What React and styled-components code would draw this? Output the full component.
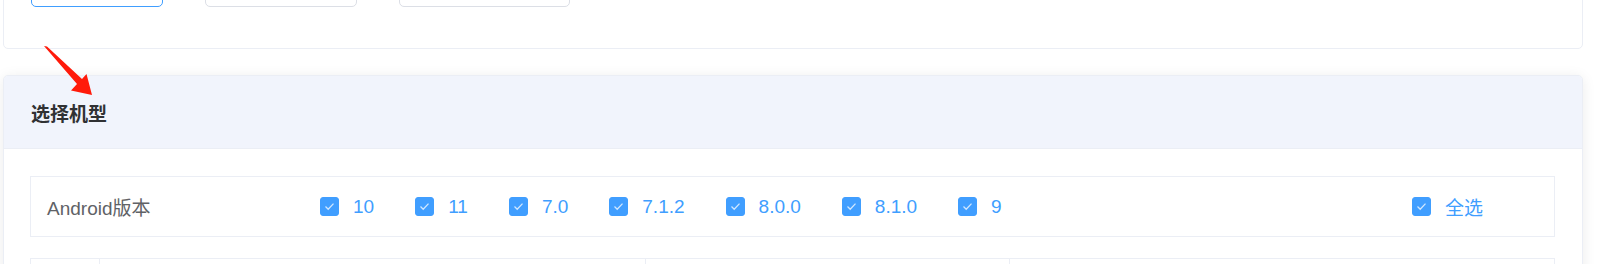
import React from "react";
import styled, { createGlobalStyle } from "styled-components";

const GlobalStyle = createGlobalStyle`
  html {
    overflow: hidden;
  }
  body {
    margin: 0;
    padding: 0;
    background: #ffffff;
    font-family: "Liberation Sans", Arial, "Noto Sans CJK SC", sans-serif;
  }
`;

const Page = styled.div`
  position: relative;
  display: flow-root;
  width: 1580px;
  padding-left: 3px;
`;

const TopCard = styled.div`
  box-sizing: border-box;
  height: 100px;
  margin-top: -51px;
  border: 1px solid #ebeef5;
  border-radius: 5px;
  background: #fff;
  display: flex;
  align-items: flex-start;
  gap: 42px;
  padding: 17px 0 0 27px;
`;

const TabButton = styled.button`
  box-sizing: border-box;
  width: ${(p) => p.w}px;
  height: 40px;
  border-radius: 5px;
  background: #fff;
  border: 1px solid ${(p) => (p.active ? "#409eff" : "#dcdfe6")};
  color: ${(p) => (p.active ? "#409eff" : "#606266")};
  font-size: 19px;
  font-family: inherit;
`;

const Card = styled.div`
  margin-top: 26px;
  border: 1px solid #ebeef5;
  border-radius: 5px;
  background: #fff;
  box-shadow: 0 2px 14px 0 rgba(0, 0, 0, 0.08);
  overflow: hidden;
`;

const CardHeader = styled.div`
  height: 72px;
  display: flex;
  align-items: center;
  padding-left: 27px;
  background: #f1f4fc;
  border-bottom: 1px solid #ebeef5;
`;

const Title = styled.h3`
  margin: 0;
  font-size: 19px;
  font-weight: 700;
  color: #303133;
`;

const CardBody = styled.div`
  padding: 27px 27px 40px 26px;
`;

const FilterRow = styled.div`
  box-sizing: border-box;
  height: 61px;
  border: 1px solid #ebeef5;
  display: flex;
  align-items: center;
`;

const RowLabel = styled.div`
  box-sizing: border-box;
  width: 289px;
  padding-left: 16px;
  font-size: 19px;
  color: #606266;
`;

const Options = styled.div`
  flex: 1;
  display: flex;
  align-items: center;
`;

const Option = styled.label`
  display: flex;
  align-items: center;
  margin-right: ${(p) => (p.last ? 71 : 41)}px;
  font-size: 19px;
  color: #409eff;
  cursor: pointer;
`;

const Box = styled.span`
  box-sizing: border-box;
  width: 19px;
  height: 19px;
  border-radius: 3px;
  background: #409eff;
  border: 1px solid #409eff;
  display: flex;
  align-items: center;
  justify-content: center;
`;

const OptionText = styled.span`
  padding-left: 14px;
`;

const Table = styled.div`
  margin-top: 21px;
  display: grid;
  grid-template-columns: 68px 546px 364px 1fr;
  border: 1px solid #ebeef5;
  height: 50px;
`;

const Cell = styled.div`
  border-left: ${(p) => (p.first ? "none" : "1px solid #ebeef5")};
`;

const Arrow = styled.svg`
  position: absolute;
  left: 0;
  top: 0;
  pointer-events: none;
`;

const versions = ["10", "11", "7.0", "7.1.2", "8.0.0", "8.1.0", "9"];

const Check = ({ children, last }) => (
  <Option last={last}>
    <Box>
      <svg width="13" height="13" viewBox="0 0 13 13">
        <polyline
          points="2.5,6.5 5.2,9.2 10.5,3.6"
          fill="none"
          stroke="rgba(255,255,255,0.75)"
          strokeWidth="1.3"
        />
      </svg>
    </Box>
    <OptionText>{children}</OptionText>
  </Option>
);

const App = () => {
  return (
    <Page>
      <GlobalStyle />
      <TopCard>
        <TabButton active w={132} />
        <TabButton w={152} />
        <TabButton w={171} />
      </TopCard>

      <Card>
        <CardHeader>
          <Title>选择机型</Title>
        </CardHeader>
        <CardBody>
          <FilterRow>
            <RowLabel>Android版本</RowLabel>
            <Options>
              {versions.map((v) => (
                <Check key={v}>{v}</Check>
              ))}
            </Options>
            <Check last>全选</Check>
          </FilterRow>
          <Table>
            <Cell first />
            <Cell />
            <Cell />
            <Cell />
          </Table>
        </CardBody>
      </Card>

      <Arrow width="120" height="120" viewBox="0 0 120 120">
        <polygon
          points="44,46 47,46.5 82,79 86.5,74 92,95 71,90.5 77,84"
          fill="#ff1a0a"
        />
      </Arrow>
    </Page>
  );
};

export default App;
